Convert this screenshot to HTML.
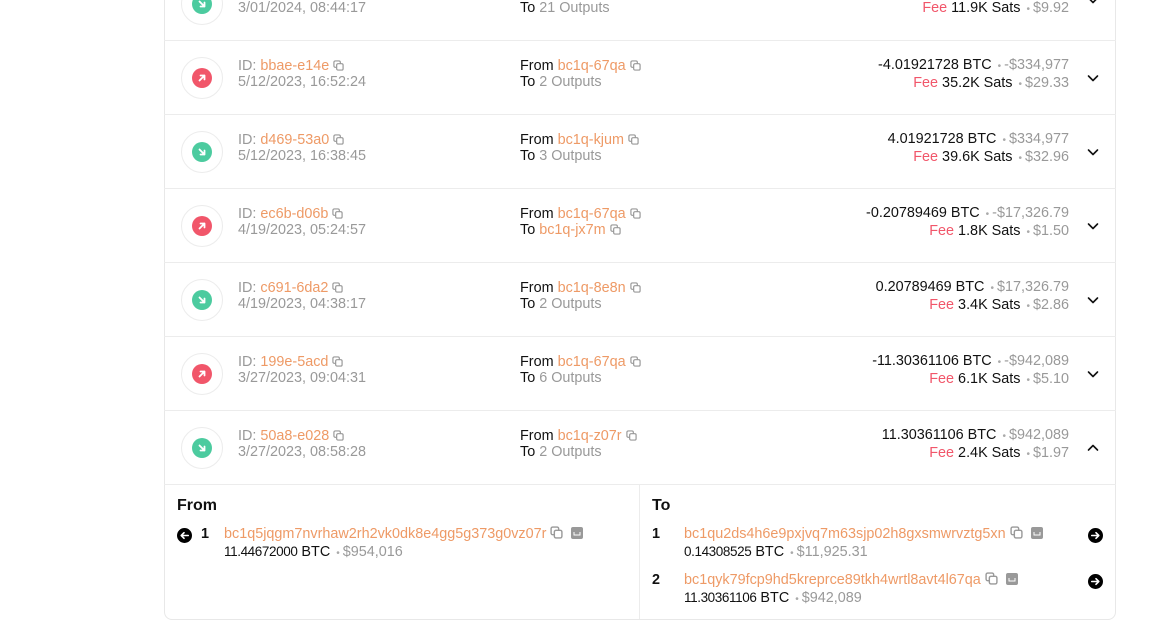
<!DOCTYPE html>
<html><head><meta charset="utf-8"><style>
*{margin:0;padding:0;box-sizing:border-box}
body{width:1172px;height:636px;overflow:hidden;background:#fff;font-family:"Liberation Sans",sans-serif;font-size:14.4px;color:#111;position:relative}
.card{position:absolute;left:164px;top:-60px;width:952px;height:680px;border:1px solid #e8e8e8;border-radius:8px}
.row{position:absolute;left:164px;width:952px;height:74px;border-bottom:1px solid #ececec}
.ic{position:absolute;left:17px;top:16px;width:42px;height:42px;border-radius:50%;border:1px solid #ececec}
.ic i{position:absolute;left:10px;top:10px;width:20px;height:20px;border-radius:50%}
.ic svg{position:absolute;left:4px;top:4px}
.red{background:#f1566a}.grn{background:#4ccb9f}
.l{position:absolute;left:74px;line-height:16px;color:#999}
.m{position:absolute;left:356px;line-height:16px;color:#111}
.r{position:absolute;right:47px;line-height:17px;text-align:right;color:#111;white-space:nowrap}
.o{color:#ee9a66}.g{color:#999}.fee{color:#f1566a}
.dot{color:#aaa;font-size:10px;padding:0 3px 0 2px}
.cv{position:absolute;right:16px;top:30px}
.cp{display:inline-block;vertical-align:-1px;margin-left:4px}
.mono{font-size:13.5px;letter-spacing:-0.4px}
</style></head><body>
<div class="card"></div>
<svg width="0" height="0" style="position:absolute"><defs>
<symbol id="cp" viewBox="0 0 12 12"><rect x="1" y="1" width="7" height="7" rx="1.5" fill="none" stroke="#999" stroke-width="1.3"/><rect x="4" y="4" width="7" height="7" rx="1.5" fill="#fff" stroke="#999" stroke-width="1.3"/></symbol>
<symbol id="up" viewBox="0 0 12 12"><path d="M3.5 8.5L8.5 3.5M4.5 3.5H8.5V7.5" fill="none" stroke="#fff" stroke-width="1.8" stroke-linecap="round" stroke-linejoin="round"/></symbol>
<symbol id="dn" viewBox="0 0 12 12"><path d="M3.5 3.5L8.5 8.5M8.5 4.5V8.5H4.5" fill="none" stroke="#fff" stroke-width="1.8" stroke-linecap="round" stroke-linejoin="round"/></symbol>
<symbol id="chd" viewBox="0 0 14 14"><path d="M2.5 5L7 9.5L11.5 5" fill="none" stroke="#111" stroke-width="1.6" stroke-linecap="round" stroke-linejoin="round"/></symbol>
<symbol id="chu" viewBox="0 0 14 14"><path d="M2.5 9L7 4.5L11.5 9" fill="none" stroke="#111" stroke-width="1.6" stroke-linecap="round" stroke-linejoin="round"/></symbol>
</defs></svg>

<div class="row" style="top:-33px"><div class="ic"><i class="grn"><svg width="12" height="12"><use href="#dn"/></svg></i></div>
<div class="l" style="top:33px">3/01/2024, 08:44:17</div>
<div class="m" style="top:33px">To <span class="g">21 Outputs</span></div>
<div class="r" style="top:33px"><span class="fee">Fee</span> 11.9K Sats <span class="dot">•</span><span class="g">$9.92</span></div>
<svg class="cv" style="top:26px" width="14" height="14"><use href="#chd"/></svg></div>

<div class="row" style="top:41px"><div class="ic"><i class="red"><svg width="12" height="12"><use href="#up"/></svg></i></div>
<div class="l" style="top:17px">ID: <span class="o">bbae-e14e</span><svg class="cp" width="11" height="11"><use href="#cp"/></svg><br>5/12/2023, 16:52:24</div>
<div class="m" style="top:17px">From <span class="o">bc1q-67qa</span><svg class="cp" width="11" height="11"><use href="#cp"/></svg><br>To <span class="g">2 Outputs</span></div>
<div class="r" style="top:16px">-4.01921728 BTC <span class="dot">•</span><span class="g">-$334,977</span><br><span class="fee">Fee</span> 35.2K Sats <span class="dot">•</span><span class="g">$29.33</span></div>
<svg class="cv" width="14" height="14"><use href="#chd"/></svg></div>

<div class="row" style="top:115px"><div class="ic"><i class="grn"><svg width="12" height="12"><use href="#dn"/></svg></i></div>
<div class="l" style="top:17px">ID: <span class="o">d469-53a0</span><svg class="cp" width="11" height="11"><use href="#cp"/></svg><br>5/12/2023, 16:38:45</div>
<div class="m" style="top:17px">From <span class="o">bc1q-kjum</span><svg class="cp" width="11" height="11"><use href="#cp"/></svg><br>To <span class="g">3 Outputs</span></div>
<div class="r" style="top:16px">4.01921728 BTC <span class="dot">•</span><span class="g">$334,977</span><br><span class="fee">Fee</span> 39.6K Sats <span class="dot">•</span><span class="g">$32.96</span></div>
<svg class="cv" width="14" height="14"><use href="#chd"/></svg></div>

<div class="row" style="top:189px"><div class="ic"><i class="red"><svg width="12" height="12"><use href="#up"/></svg></i></div>
<div class="l" style="top:17px">ID: <span class="o">ec6b-d06b</span><svg class="cp" width="11" height="11"><use href="#cp"/></svg><br>4/19/2023, 05:24:57</div>
<div class="m" style="top:17px">From <span class="o">bc1q-67qa</span><svg class="cp" width="11" height="11"><use href="#cp"/></svg><br>To <span class="o">bc1q-jx7m</span><svg class="cp" width="11" height="11"><use href="#cp"/></svg></div>
<div class="r" style="top:16px">-0.20789469 BTC <span class="dot">•</span><span class="g">-$17,326.79</span><br><span class="fee">Fee</span> 1.8K Sats <span class="dot">•</span><span class="g">$1.50</span></div>
<svg class="cv" width="14" height="14"><use href="#chd"/></svg></div>

<div class="row" style="top:263px"><div class="ic"><i class="grn"><svg width="12" height="12"><use href="#dn"/></svg></i></div>
<div class="l" style="top:17px">ID: <span class="o">c691-6da2</span><svg class="cp" width="11" height="11"><use href="#cp"/></svg><br>4/19/2023, 04:38:17</div>
<div class="m" style="top:17px">From <span class="o">bc1q-8e8n</span><svg class="cp" width="11" height="11"><use href="#cp"/></svg><br>To <span class="g">2 Outputs</span></div>
<div class="r" style="top:16px">0.20789469 BTC <span class="dot">•</span><span class="g">$17,326.79</span><br><span class="fee">Fee</span> 3.4K Sats <span class="dot">•</span><span class="g">$2.86</span></div>
<svg class="cv" width="14" height="14"><use href="#chd"/></svg></div>

<div class="row" style="top:337px"><div class="ic"><i class="red"><svg width="12" height="12"><use href="#up"/></svg></i></div>
<div class="l" style="top:17px">ID: <span class="o">199e-5acd</span><svg class="cp" width="11" height="11"><use href="#cp"/></svg><br>3/27/2023, 09:04:31</div>
<div class="m" style="top:17px">From <span class="o">bc1q-67qa</span><svg class="cp" width="11" height="11"><use href="#cp"/></svg><br>To <span class="g">6 Outputs</span></div>
<div class="r" style="top:16px">-11.30361106 BTC <span class="dot">•</span><span class="g">-$942,089</span><br><span class="fee">Fee</span> 6.1K Sats <span class="dot">•</span><span class="g">$5.10</span></div>
<svg class="cv" width="14" height="14"><use href="#chd"/></svg></div>

<div class="row" style="top:411px"><div class="ic"><i class="grn"><svg width="12" height="12"><use href="#dn"/></svg></i></div>
<div class="l" style="top:17px">ID: <span class="o">50a8-e028</span><svg class="cp" width="11" height="11"><use href="#cp"/></svg><br>3/27/2023, 08:58:28</div>
<div class="m" style="top:17px">From <span class="o">bc1q-z07r</span><svg class="cp" width="11" height="11"><use href="#cp"/></svg><br>To <span class="g">2 Outputs</span></div>
<div class="r" style="top:16px">11.30361106 BTC <span class="dot">•</span><span class="g">$942,089</span><br><span class="fee">Fee</span> 2.4K Sats <span class="dot">•</span><span class="g">$1.97</span></div>
<svg class="cv" width="14" height="14"><use href="#chu"/></svg></div>

<div style="position:absolute;left:639px;top:485px;width:1px;height:134px;background:#ececec"></div>
<div style="position:absolute;left:177px;top:497px;font-size:16px;font-weight:bold">From</div>
<div style="position:absolute;left:652px;top:497px;font-size:16px;font-weight:bold">To</div>

<svg style="position:absolute;left:177px;top:528px" width="15" height="15" viewBox="0 0 16 16"><circle cx="8" cy="8" r="8" fill="#000"/><path d="M12 8H4.5M7.5 5L4.5 8L7.5 11" fill="none" stroke="#fff" stroke-width="1.7" stroke-linecap="round" stroke-linejoin="round"/></svg>
<div style="position:absolute;left:201px;top:526px;font-weight:bold">1</div>
<div style="position:absolute;left:224px;top:526px;line-height:17px"><span class="o">bc1q5jqgm7nvrhaw2rh2vk0dk8e4gg5g373g0vz07r</span><svg class="cp" width="13" height="13"><use href="#cp"/></svg> <svg class="cp" width="12" height="12" viewBox="0 0 12 12"><rect width="12" height="12" rx="2" fill="#999"/><path d="M3 5v3h6V5" fill="none" stroke="#fff" stroke-width="1"/></svg><br><span class="mono">11.44672000</span> BTC <span class="dot">•</span><span class="g">$954,016</span></div>

<div style="position:absolute;left:652px;top:526px;font-weight:bold">1</div>
<div style="position:absolute;left:684px;top:526px;line-height:17px"><span class="o">bc1qu2ds4h6e9pxjvq7m63sjp02h8gxsmwrvztg5xn</span><svg class="cp" width="13" height="13"><use href="#cp"/></svg> <svg class="cp" width="12" height="12" viewBox="0 0 12 12"><rect width="12" height="12" rx="2" fill="#999"/><path d="M3 5v3h6V5" fill="none" stroke="#fff" stroke-width="1"/></svg><br><span class="mono">0.14308525</span> BTC <span class="dot">•</span><span class="g">$11,925.31</span></div>
<svg style="position:absolute;left:1088px;top:528px" width="15" height="15" viewBox="0 0 16 16"><circle cx="8" cy="8" r="8" fill="#000"/><path d="M4 8H11.5M8.5 5L11.5 8L8.5 11" fill="none" stroke="#fff" stroke-width="1.7" stroke-linecap="round" stroke-linejoin="round"/></svg>

<div style="position:absolute;left:652px;top:572px;font-weight:bold">2</div>
<div style="position:absolute;left:684px;top:572px;line-height:17px"><span class="o">bc1qyk79fcp9hd5kreprce89tkh4wrtl8avt4l67qa</span><svg class="cp" width="13" height="13"><use href="#cp"/></svg> <svg class="cp" width="12" height="12" viewBox="0 0 12 12"><rect width="12" height="12" rx="2" fill="#999"/><path d="M3 5v3h6V5" fill="none" stroke="#fff" stroke-width="1"/></svg><br><span class="mono">11.30361106</span> BTC <span class="dot">•</span><span class="g">$942,089</span></div>
<svg style="position:absolute;left:1088px;top:574px" width="15" height="15" viewBox="0 0 16 16"><circle cx="8" cy="8" r="8" fill="#000"/><path d="M4 8H11.5M8.5 5L11.5 8L8.5 11" fill="none" stroke="#fff" stroke-width="1.7" stroke-linecap="round" stroke-linejoin="round"/></svg>
</body></html>
